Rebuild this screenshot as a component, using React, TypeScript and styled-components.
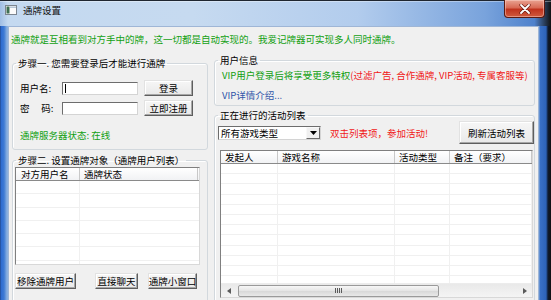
import React from "react";
import styled, { createGlobalStyle } from "styled-components";

const GlobalStyle = createGlobalStyle`
  html, body { margin: 0; padding: 0; overflow: hidden; background: #111; }
  body {
    font-family: "Noto Sans CJK SC", "Liberation Sans", sans-serif;
    font-size: 9.5px;
    color: #000;
  }
  * { box-sizing: border-box; }
`;

const Window = styled.div`
  width: 551px;
  height: 308px;
  display: flex;
  flex-direction: column;
  background: linear-gradient(
    90deg,
    #1e3f7a 0px,
    #2d6bd0 1px,
    #3d7ad4 4px,
    #8ab0e0 7px,
    #8ab0e0 539px,
    #3a70c6 540px,
    #2d62b8 546px,
    #0e1a30 548px,
    #111 551px
  );
`;

const TitleBar = styled.div`
  height: 26px;
  flex: none;
  display: flex;
  align-items: flex-start;
  padding-left: 5px;
  background: linear-gradient(90deg, #9fbde4 0px, #c4d9f0 8px, #c6daf0 35%, #b2cced 65%, #79a3dc 88%, #4f82cc 97%, #111 100%);
  box-shadow: inset 0 1px 0 #1f2630, inset 0 2px 0 rgba(255,255,255,0.35);
`;

const AppIcon = styled.svg`
  margin-top: 5px;
  flex: none;
`;

const Title = styled.div`
  margin: 4px 0 0 6px;
  line-height: 12px;
  color: #111;
`;

const CloseButton = styled.div`
  margin-left: auto;
  margin-right: 6px;
  width: 41px;
  height: 18px;
  border: 1px solid #5a1a12;
  border-top: none;
  border-radius: 0 0 4px 4px;
  background: linear-gradient(#e9a392 0%, #d86a55 45%, #c0331e 55%, #cf5a3e 100%);
  box-shadow: inset 0 0 0 1px rgba(255, 220, 210, 0.45);
  display: flex;
  align-items: center;
  justify-content: center;
`;

const Client = styled.div`
  flex: 1;
  margin: 0 12px 0 8px;
  border: 1px solid #9fb6d6;
  background: #f0f0f0;
  display: flex;
  flex-direction: column;
  min-height: 0;
`;

const Notice = styled.div`
  padding: 6px 0 0 2px;
  line-height: 12px;
  color: #12a012;
  white-space: nowrap;
`;

const Columns = styled.div`
  flex: 1;
  display: flex;
  gap: 6px;
  padding-left: 3px;
  min-height: 0;
`;

const Column = styled.div<{ $w: number; $top: number }>`
  width: ${(p) => p.$w}px;
  flex: none;
  display: flex;
  flex-direction: column;
  padding-top: ${(p) => p.$top}px;
`;

const Group = styled.fieldset<{ $h?: number; $mt?: number }>`
  margin: ${(p) => p.$mt ?? 0}px 0 0 0;
  padding: 0;
  min-width: 0;
  border: 1px solid #d2d8dd;
  border-radius: 3px;
  box-shadow: inset 1px 1px 0 #fff;
  ${(p) => (p.$h ? `height: ${p.$h}px; flex: none;` : `flex: 1;`)}
  display: flex;
  flex-direction: column;
`;

const Legend = styled.legend`
  margin-left: 3px;
  padding: 0 2px;
  line-height: 12px;
  white-space: nowrap;
`;

const GroupBody = styled.div<{ $pl: number; $pr?: number }>`
  flex: 1;
  display: flex;
  flex-direction: column;
  padding-left: ${(p) => p.$pl}px;
  padding-right: ${(p) => p.$pr ?? 0}px;
  min-height: 0;
`;

const FormRow = styled.div<{ $mt: number }>`
  display: flex;
  align-items: center;
  height: 16px;
  margin-top: ${(p) => p.$mt}px;
`;

const FieldLabel = styled.span`
  width: 42px;
  flex: none;
  white-space: pre;
  line-height: 12px;
`;

const TextInput = styled.div<{ $caret?: boolean }>`
  width: 76px;
  height: 13px;
  flex: none;
  background: #fff;
  border: 1px solid;
  border-color: #6d6d6d #d4d4d4 #d4d4d4 #6d6d6d;
  position: relative;
  ${(p) =>
    p.$caret
      ? `&::after { content: ""; position: absolute; left: 2px; top: 1px; width: 1px; height: 9px; background: #000; }`
      : ""}
`;

const Button = styled.div<{ $w: number; $h: number; $ml?: number }>`
  width: ${(p) => p.$w}px;
  height: ${(p) => p.$h}px;
  margin-left: ${(p) => p.$ml ?? 0}px;
  flex: none;
  display: flex;
  align-items: center;
  justify-content: center;
  white-space: nowrap;
  line-height: 12px;
  background: linear-gradient(#f6f6f6, #e9e9e9);
  border: 1px solid;
  border-color: #e2e2e2 #5e5e5e #5e5e5e #e2e2e2;
  box-shadow: inset -1px -1px 0 #a7a7a7, inset 1px 1px 0 #fff;
`;

const Text = styled.div<{ $color?: string; $mt: number }>`
  margin-top: ${(p) => p.$mt}px;
  line-height: 12px;
  white-space: nowrap;
  color: ${(p) => p.$color ?? "#000"};
`;

const Span = styled.span<{ $color: string }>`
  color: ${(p) => p.$color};
`;

const ListView = styled.div<{ $w: number; $h: number; $mt: number; $ml?: number }>`
  width: ${(p) => p.$w}px;
  height: ${(p) => p.$h}px;
  margin-top: ${(p) => p.$mt}px;
  margin-left: ${(p) => p.$ml ?? 0}px;
  flex: none;
  background: #fff;
  border: 1px solid;
  border-color: #7f7f7f #d8d8d8 #d8d8d8 #7f7f7f;
  display: flex;
  flex-direction: column;
  overflow: hidden;
`;

const HeaderRow = styled.div<{ $h: number }>`
  height: ${(p) => p.$h}px;
  flex: none;
  display: flex;
  background: linear-gradient(#ffffff, #f1f2f4);
  border-bottom: 1px solid #8a8a8a;
`;

const HeaderCell = styled.div<{ $w: number; $pl: number }>`
  width: ${(p) => p.$w}px;
  flex: none;
  padding-left: ${(p) => p.$pl}px;
  border-right: 1px solid #c8c8c8;
  line-height: 12px;
  white-space: nowrap;
  overflow: hidden;
`;

const Rows = styled.div`
  flex: 1;
  overflow: hidden;
`;

const Row = styled.div<{ $h: number }>`
  height: ${(p) => p.$h}px;
  display: flex;
  border-bottom: 1px solid #f0f0f0;
`;

const Cell = styled.div<{ $w: number }>`
  width: ${(p) => p.$w}px;
  flex: none;
  border-right: 1px solid #f0f0f0;
`;

const ButtonRow = styled.div`
  display: flex;
  margin-top: 8px;
`;

const ToolRow = styled.div`
  display: flex;
  align-items: center;
  height: 23px;
  flex: none;
`;

const Combo = styled.div`
  width: 103px;
  height: 14px;
  flex: none;
  background: #fff;
  border: 1px solid;
  border-color: #6d6d6d #d4d4d4 #d4d4d4 #6d6d6d;
  display: flex;
  align-items: center;
`;

const ComboText = styled.span`
  flex: 1;
  padding-left: 2px;
  line-height: 12px;
  white-space: nowrap;
`;

const ComboArrow = styled.div`
  width: 14px;
  height: 12px;
  flex: none;
  background: #f0f0f0;
  border: 1px solid;
  border-color: #f8f8f8 #6a6a6a #6a6a6a #f8f8f8;
  display: flex;
  align-items: center;
  justify-content: center;
`;

const Hint = styled.span`
  margin-left: 9px;
  color: #f01818;
  line-height: 12px;
  white-space: nowrap;
`;

const RightButton = styled(Button)`
  margin-left: auto;
`;

const HScroll = styled.div`
  height: 14px;
  flex: none;
  display: flex;
  align-items: center;
  background: linear-gradient(#e9e9e9, #f4f4f4);
  border-top: 1px solid #ececec;
`;

const ScrollArrow = styled.div`
  width: 15px;
  height: 13px;
  flex: none;
  display: flex;
  align-items: center;
  justify-content: center;
`;

const ScrollThumb = styled.div`
  width: 201px;
  height: 12px;
  margin-left: 2px;
  border: 1px solid #9a9a9a;
  border-radius: 2px;
  background: linear-gradient(#f7f7f7, #e4e4e4 50%, #d8d8d8 51%, #e8e8e8);
  display: flex;
  align-items: center;
  justify-content: center;
  gap: 1px;
`;

const Grip = styled.div`
  width: 1px;
  height: 5px;
  background: #5a5a5a;
`;

const ScrollTrack = styled.div`
  flex: 1;
`;

const leftCols = [64, 118, 1];
const rightCols = [57, 117, 55, 82];

export default function App() {
  return (
    <>
      <GlobalStyle />
      <Window>
        <TitleBar>
          <AppIcon width="12" height="10" viewBox="0 0 12 10">
            <rect x="0.5" y="0.5" width="11" height="9" fill="#fbfbfb" stroke="#7c8590" />
            <rect x="1.5" y="1.5" width="3" height="7" fill="#3f6f52" />
            <rect x="5" y="1.5" width="6" height="1.5" fill="#b8c8d8" />
          </AppIcon>
          <Title>通牌设置</Title>
          <CloseButton>
            <svg width="12" height="10" viewBox="0 0 12 10">
              <path d="M2 1 L10 9 M10 1 L2 9" stroke="#6a1c12" strokeWidth="3.2" strokeLinecap="round" />
              <path d="M2 1 L10 9 M10 1 L2 9" stroke="#fff" strokeWidth="1.8" strokeLinecap="round" />
            </svg>
          </CloseButton>
        </TitleBar>
        <Client>
          <Notice>通牌就是互相看到对方手中的牌，这一切都是自动实现的。我爱记牌器可实现多人同时通牌。</Notice>
          <Columns>
            <Column $w={196} $top={12}>
              <Group $h={93}>
                <Legend>步骤一. 您需要登录后才能进行通牌</Legend>
                <GroupBody $pl={7}>
                  <FormRow $mt={11}>
                    <FieldLabel>用户名:</FieldLabel>
                    <TextInput $caret />
                    <Button $w={49} $h={16} $ml={6}>登录</Button>
                  </FormRow>
                  <FormRow $mt={4}>
                    <FieldLabel>{"密\u3000 码:"}</FieldLabel>
                    <TextInput />
                    <Button $w={49} $h={16} $ml={6}>立即注册</Button>
                  </FormRow>
                  <Text $mt={13} $color="#12a012">通牌服务器状态: 在线</Text>
                </GroupBody>
              </Group>
              <Group $mt={4}>
                <Legend>步骤二. 设置通牌对象（通牌用户列表）</Legend>
                <GroupBody $pl={2} $pr={7}>
                  <ListView $w={185} $h={98} $mt={1}>
                    <HeaderRow $h={13}>
                      <HeaderCell $w={64} $pl={5}>对方用户名</HeaderCell>
                      <HeaderCell $w={118} $pl={4}>通牌状态</HeaderCell>
                    </HeaderRow>
                    <Rows>
                      {Array.from({ length: 7 }).map((_, i) => (
                        <Row key={i} $h={13.3}>
                          {leftCols.slice(0, 1).map((w, j) => (
                            <Cell key={j} $w={w} />
                          ))}
                        </Row>
                      ))}
                    </Rows>
                  </ListView>
                  <ButtonRow>
                    <Button $w={61} $h={16}>移除通牌用户</Button>
                    <Button $w={43} $h={16} $ml={19}>直接聊天</Button>
                    <Button $w={49} $h={16} $ml={10}>通牌小窗口</Button>
                  </ButtonRow>
                </GroupBody>
              </Group>
            </Column>
            <Column $w={321} $top={9}>
              <Group $h={52}>
                <Legend>用户信息</Legend>
                <GroupBody $pl={7}>
                  <Text $mt={3}>
                    <Span $color="#12a012">VIP用户登录后将享受更多特权</Span>
                    <Span $color="#f01818">(过滤广告, 合作通牌, VIP活动, 专属客服等)</Span>
                  </Text>
                  <Text $mt={8} $color="#2f55a8">VIP详情介绍...</Text>
                </GroupBody>
              </Group>
              <Group $mt={3}>
                <Legend>正在进行的活动列表</Legend>
                <GroupBody $pl={3}>
                  <ToolRow>
                    <Combo>
                      <ComboText>所有游戏类型</ComboText>
                      <ComboArrow>
                        <svg width="7" height="4" viewBox="0 0 7 4">
                          <path d="M0 0 H7 L3.5 4 Z" fill="#000" />
                        </svg>
                      </ComboArrow>
                    </Combo>
                    <Hint>双击列表项，参加活动!</Hint>
                    <RightButton $w={75} $h={23}>刷新活动列表</RightButton>
                  </ToolRow>
                  <ListView $w={313} $h={148} $mt={6} $ml={2}>
                    <HeaderRow $h={13}>
                      <HeaderCell $w={57} $pl={4}>发起人</HeaderCell>
                      <HeaderCell $w={117} $pl={4}>游戏名称</HeaderCell>
                      <HeaderCell $w={55} $pl={4}>活动类型</HeaderCell>
                      <HeaderCell $w={82} $pl={4}>备注（要求）</HeaderCell>
                    </HeaderRow>
                    <Rows>
                      {Array.from({ length: 13 }).map((_, i) => (
                        <Row key={i} $h={10.2}>
                          {rightCols.map((w, j) => (
                            <Cell key={j} $w={w} />
                          ))}
                        </Row>
                      ))}
                    </Rows>
                    <HScroll>
                      <ScrollArrow>
                        <svg width="4" height="6" viewBox="0 0 4 6">
                          <path d="M4 0 V6 L0 3 Z" fill="#5a5a5a" />
                        </svg>
                      </ScrollArrow>
                      <ScrollThumb>
                        <Grip />
                        <Grip />
                        <Grip />
                        <Grip />
                      </ScrollThumb>
                      <ScrollTrack />
                      <ScrollArrow>
                        <svg width="4" height="6" viewBox="0 0 4 6">
                          <path d="M0 0 V6 L4 3 Z" fill="#5a5a5a" />
                        </svg>
                      </ScrollArrow>
                    </HScroll>
                  </ListView>
                </GroupBody>
              </Group>
            </Column>
          </Columns>
        </Client>
      </Window>
    </>
  );
}
